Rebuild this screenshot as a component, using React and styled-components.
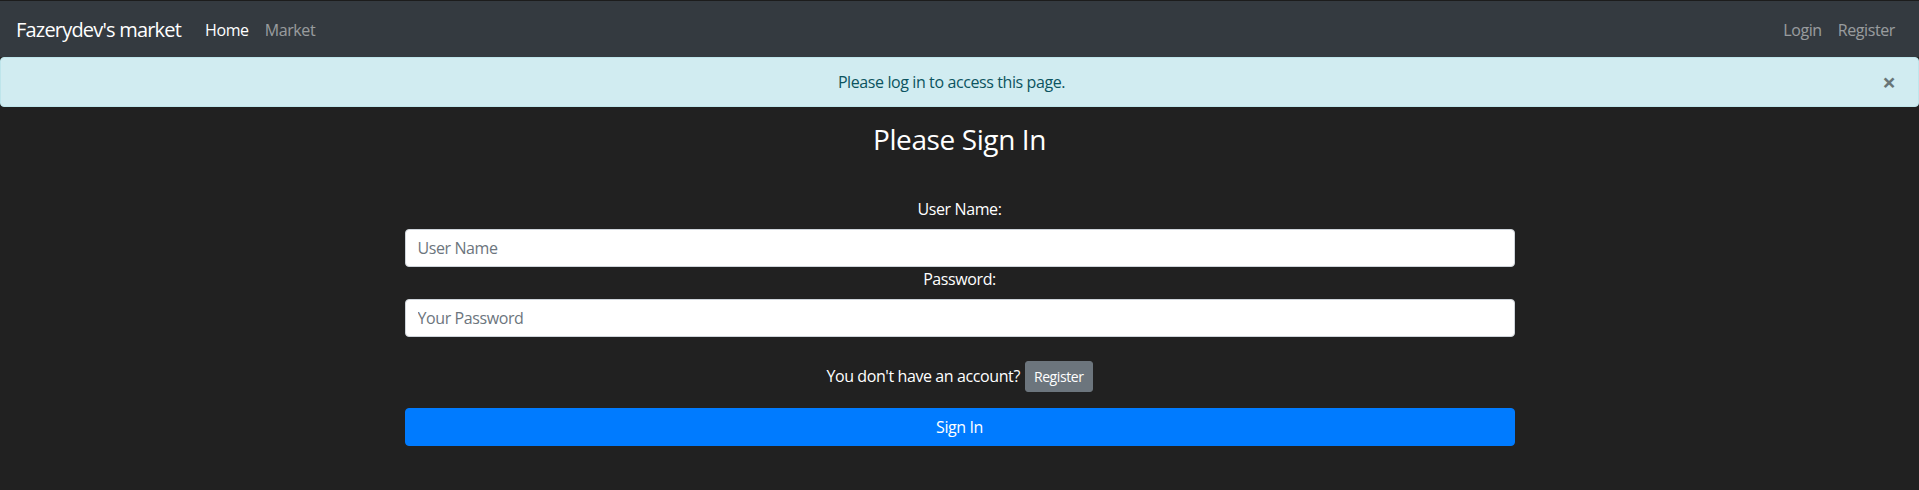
import React from 'react';
import styled, { createGlobalStyle } from 'styled-components';

const GlobalStyle = createGlobalStyle`
  * {
    box-sizing: border-box;
  }

  body {
    margin: 0;
    background: #212121;
    color: #fff;
    font-family: "Open Sans", "Noto Sans", sans-serif;
    font-size: 16px;
    line-height: 1.5;
    letter-spacing: -0.025em;
  }
`;

const Page = styled.div`
  border-top: 1px solid #1c1c1c;
  min-height: 489px;
`;

const Navbar = styled.nav`
  display: flex;
  align-items: center;
  height: 56px;
  padding: 9px 16px 7px;
  background: #343a40;
`;

const Brand = styled.a`
  font-size: 20px;
  line-height: 30px;
  letter-spacing: -0.04em;
  color: #fff;
  margin-right: 16px;
  text-decoration: none;
`;

const NavGroup = styled.div`
  display: flex;
  margin-left: ${({ $right }) => ($right ? 'auto' : '0')};
`;

const NavLink = styled.a`
  padding: 8px;
  color: ${({ $active }) => ($active ? '#fff' : 'rgba(255, 255, 255, 0.5)')};
  text-decoration: none;
`;

const Alert = styled.div`
  position: relative;
  height: 50px;
  padding: 12px 36px 12px 20px;
  margin-bottom: 16px;
  background: #d1ecf1;
  border: 1px solid #bee5eb;
  border-radius: 4px;
  color: #0c5460;
  text-align: center;
`;

const CloseButton = styled.button`
  position: absolute;
  top: 0;
  right: 0;
  padding: 12px 22px;
  background: transparent;
  border: 0;
  font-family: inherit;
  font-size: 24px;
  font-weight: 700;
  line-height: 1;
  color: #000;
  opacity: 0.5;
`;

const Container = styled.main`
  width: 1140px;
  margin: 0 auto;
  padding: 0 15px;
`;

const Title = styled.h3`
  margin: 0 0 40px;
  font-size: 28px;
  font-weight: 400;
  line-height: 1.2;
  text-align: center;
`;

const Label = styled.label`
  display: block;
  margin-bottom: 8px;
  text-align: center;
`;

const Input = styled.input`
  display: block;
  width: 100%;
  height: 38px;
  padding: 6px 12px;
  font-family: inherit;
  font-size: 16px;
  letter-spacing: inherit;
  color: #495057;
  background: #fff;
  border: 1px solid #ced4da;
  border-radius: 4px;

  &::placeholder {
    color: #6c757d;
  }
`;

const AccountRow = styled.div`
  display: flex;
  justify-content: center;
  align-items: center;
  gap: 5px;
  margin-top: 24px;
`;

const Button = styled.button`
  font-family: inherit;
  letter-spacing: inherit;
  color: #fff;
  border: 1px solid ${({ $variant }) => ($variant === 'secondary' ? '#6c757d' : '#007bff')};
  background: ${({ $variant }) => ($variant === 'secondary' ? '#6c757d' : '#007bff')};
  border-radius: ${({ $small }) => ($small ? '3px' : '4px')};
  padding: ${({ $small }) => ($small ? '4px 8px' : '6px 12px')};
  font-size: ${({ $small }) => ($small ? '14px' : '16px')};
  line-height: 1.5;
`;

const BlockButton = styled(Button)`
  display: block;
  width: 100%;
  margin-top: 16px;
`;

export default function App() {
  return (
    <Page>
      <GlobalStyle />
      <Navbar>
        <Brand href="#">Fazerydev's market</Brand>
        <NavGroup>
          <NavLink href="#" $active>Home</NavLink>
          <NavLink href="#">Market</NavLink>
        </NavGroup>
        <NavGroup $right>
          <NavLink href="#">Login</NavLink>
          <NavLink href="#">Register</NavLink>
        </NavGroup>
      </Navbar>
      <Alert>
        Please log in to access this page.
        <CloseButton type="button">×</CloseButton>
      </Alert>
      <Container>
        <Title>Please Sign In</Title>
        <form>
          <Label htmlFor="username">User Name:</Label>
          <Input id="username" placeholder="User Name" />
          <Label htmlFor="password">Password:</Label>
          <Input id="password" type="password" placeholder="Your Password" />
          <AccountRow>
            <span>You don't have an account?</span>
            <Button type="button" $variant="secondary" $small>Register</Button>
          </AccountRow>
          <BlockButton type="submit">Sign In</BlockButton>
        </form>
      </Container>
    </Page>
  );
}
